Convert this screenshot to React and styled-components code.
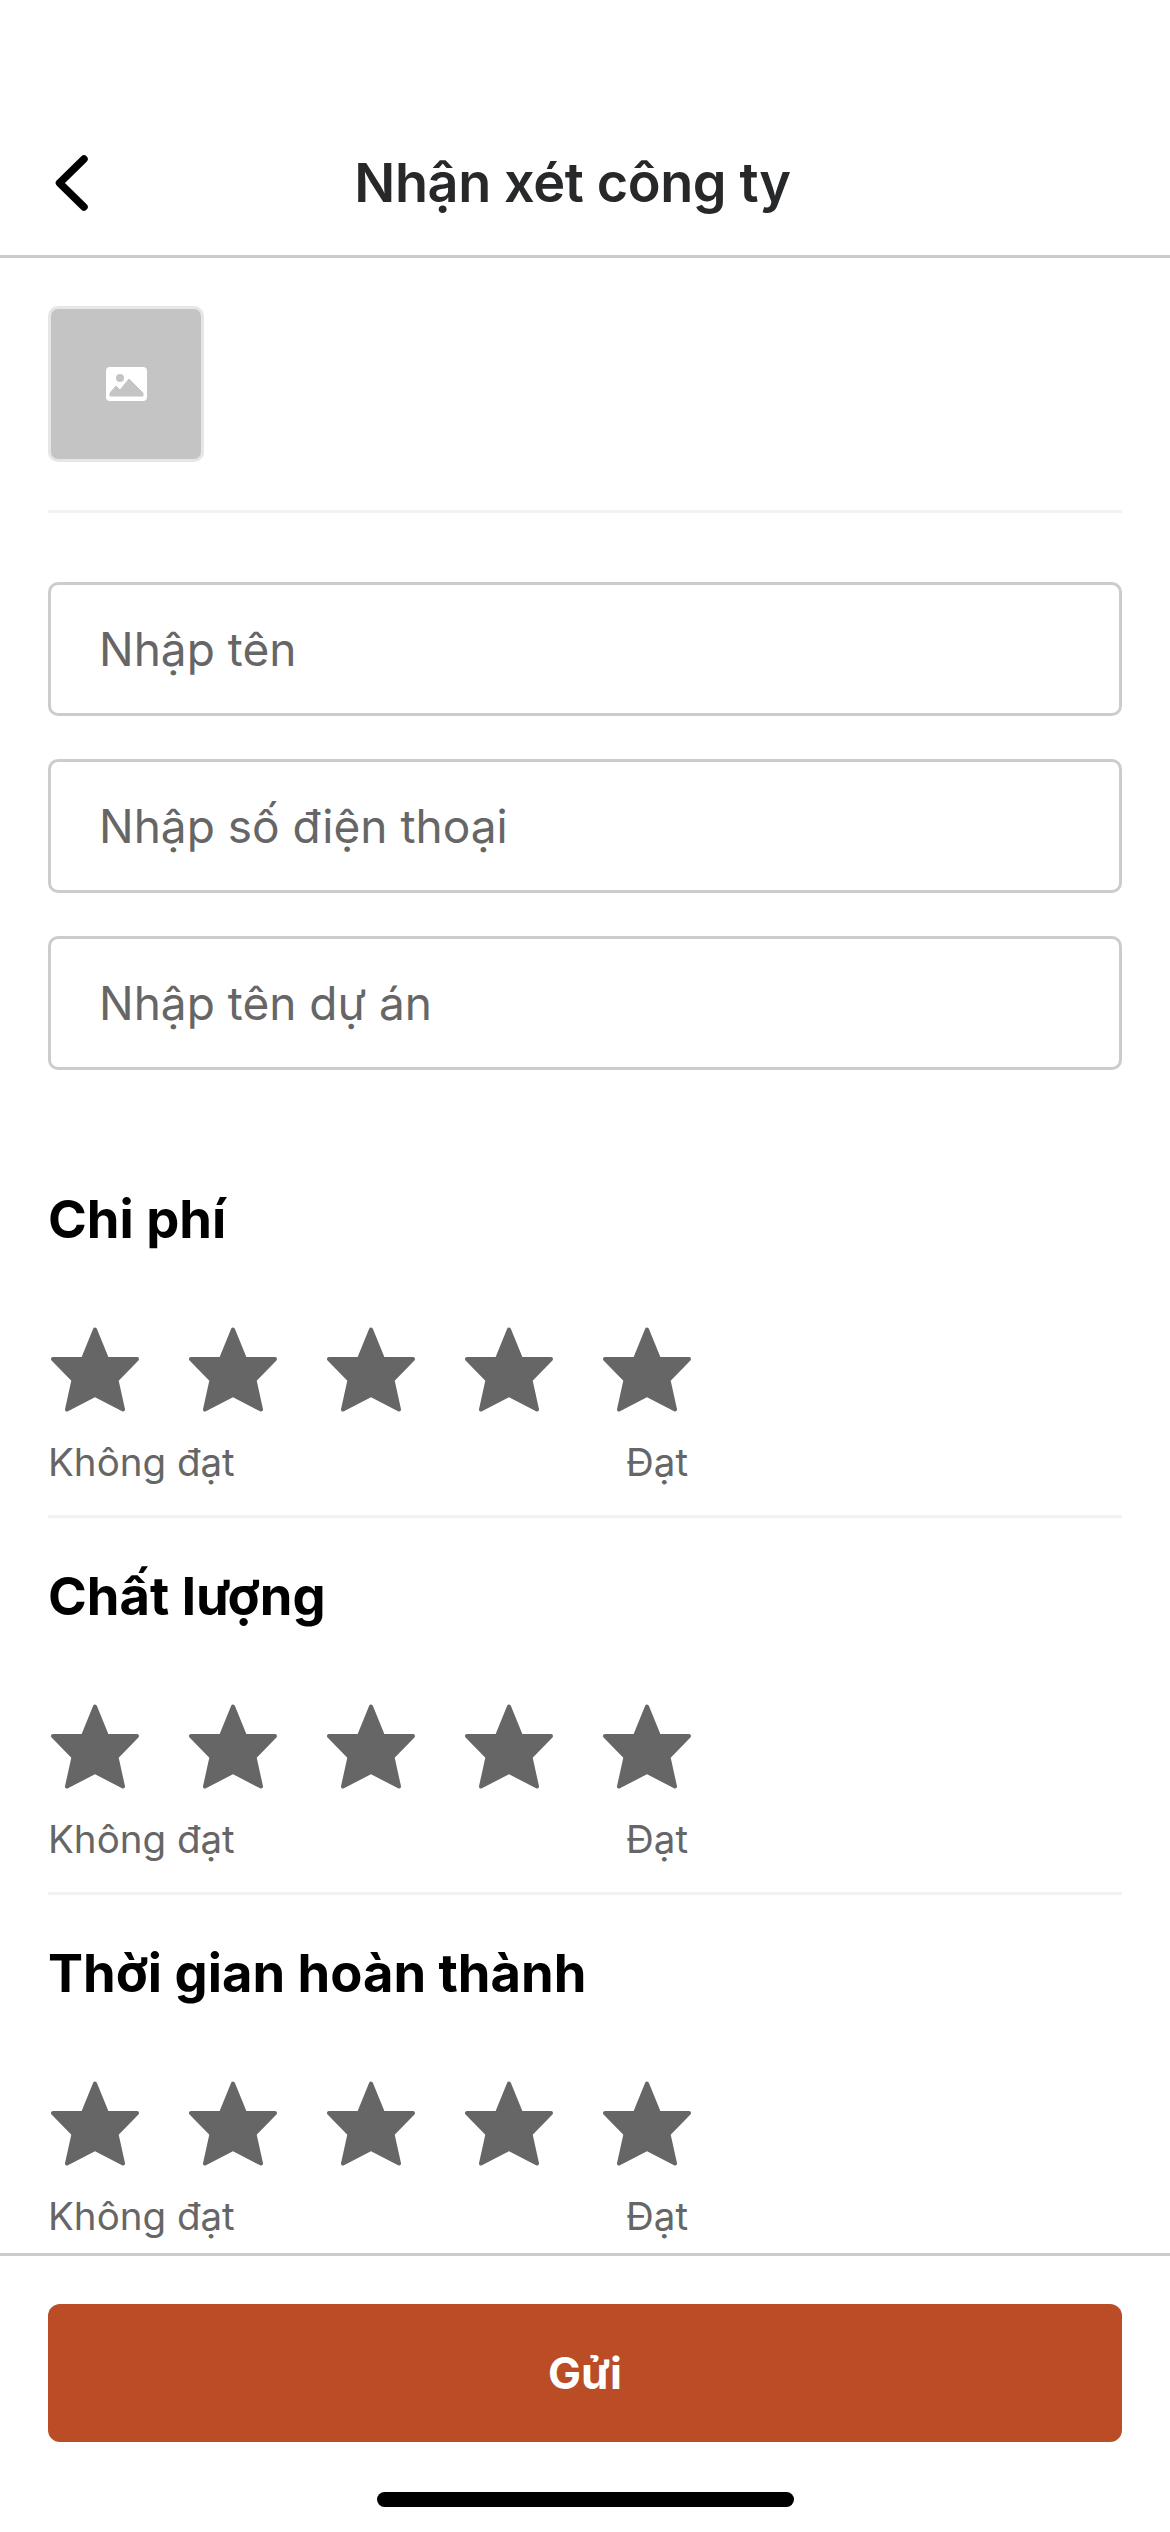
import React from "react";
import styled, { createGlobalStyle } from "styled-components";

const GlobalStyle = createGlobalStyle`
  * { box-sizing: border-box; }
  html, body { margin: 0; padding: 0; background: #fff; }
  body { font-family: Inter, "Liberation Sans", sans-serif; }
`;

const Page = styled.div`
  width: 1170px;
  height: 2532px;
  display: flex;
  flex-direction: column;
  background: #fff;
  overflow: hidden;
`;

const Header = styled.header`
  height: 258px;
  flex: none;
  padding: 125px 0 0 55px;
  display: flex;
  align-items: flex-start;
  border-bottom: 3px solid #cbcbcb;
`;

const BackButton = styled.button`
  width: 34px;
  height: 56px;
  margin-top: 30px;
  padding: 0;
  border: none;
  background: none;
  flex: none;
  display: block;
`;

const Title = styled.h1`
  flex: 1;
  margin: 0;
  padding-right: 114px;
  text-align: center;
  font-size: 54px;
  letter-spacing: -0.4px;
  line-height: 116px;
  font-weight: 600;
  color: #26282a;
`;

const Content = styled.main`
  flex: 1;
  min-height: 0;
  overflow: hidden;
  padding: 48px 48px 0;
`;

const PhotoBox = styled.div`
  width: 156px;
  height: 156px;
  display: flex;
  align-items: center;
  justify-content: center;
  background: #c4c4c4;
  border: 3px solid #e6e6e6;
  border-radius: 10px;
`;

const Divider = styled.div`
  height: 3px;
  background: #f2f2f2;
`;

const PhotoDivider = styled(Divider)`
  margin-top: 48px;
`;

const Fields = styled.div`
  display: flex;
  flex-direction: column;
  gap: 43px;
  margin-top: 69px;
`;

const Field = styled.input`
  width: 100%;
  height: 134px;
  padding: 0 48px;
  border: 3px solid #cccccc;
  border-radius: 10px;
  outline: none;
  font-family: inherit;
  font-size: 46px;
  background: #fff;
  &::placeholder {
    color: #666666;
    opacity: 1;
  }
`;

const Sections = styled.div`
  margin-top: 111px;
`;

const Section = styled.section`
  height: 377px;
`;

const SectionTitle = styled.h2`
  margin: 0;
  font-size: 52.5px;
  line-height: 76px;
  font-weight: 700;
  color: #000;
`;

const Stars = styled.div`
  display: flex;
  gap: 50px;
  margin: 70px 0 0 3px;
`;

const Labels = styled.div`
  width: 640px;
  display: flex;
  justify-content: space-between;
  margin-top: 22px;
  font-size: 38.5px;
  line-height: 56px;
  color: #666666;
`;

const SectionDivider = styled(Divider)`
  margin-top: 25px;
`;

const Footer = styled.footer`
  flex: none;
  height: 279px;
  padding: 48px 48px 0;
  border-top: 3px solid #cbcbcb;
  display: flex;
  flex-direction: column;
  align-items: center;
`;

const SubmitButton = styled.button`
  width: 100%;
  height: 138px;
  border: none;
  border-radius: 12px;
  background: #ba4c26;
  color: #fff;
  font-family: inherit;
  font-size: 44px;
  font-weight: 700;
`;

const HomeIndicator = styled.div`
  width: 417px;
  height: 15px;
  margin-top: 50px;
  border-radius: 8px;
  background: #000;
`;

const BackIcon = () => (
  <svg width="34" height="56" viewBox="0 0 34 56" fill="none">
    <path d="M29 4 4.500 28 29 52" stroke="#000" strokeWidth="7.500" strokeLinecap="round" strokeLinejoin="round" />
  </svg>
);

const PhotoIcon = () => (
  <svg width="41" height="34" viewBox="0 0 41 34">
    <rect width="41" height="34" rx="4" fill="#fff" />
    <circle cx="14" cy="11" r="4" fill="#c4c4c4" />
    <path d="M4 29v-3l6-7 4 4 9-11 14 14v3z" fill="#c4c4c4" stroke="#c4c4c4" strokeWidth="1" strokeLinejoin="round" />
  </svg>
);

const StarIcon = () => (
  <svg width="88" height="85" viewBox="0 0 88 85">
    <path
      d="M44 2.500 56 32H86L65.500 53 72 82.500 44 68 16 82.500 22.500 53 2 32H32Z"
      fill="#666666"
      stroke="#666666"
      strokeWidth="4"
      strokeLinejoin="round"
    />
  </svg>
);

const criteria = ["Chi phí", "Chất lượng", "Thời gian hoàn thành"];

function App() {
  return (
    <Page>
      <GlobalStyle />
      <Header>
        <BackButton aria-label="Quay lại">
          <BackIcon />
        </BackButton>
        <Title>Nhận xét công ty</Title>
      </Header>
      <Content>
        <PhotoBox>
          <PhotoIcon />
        </PhotoBox>
        <PhotoDivider />
        <Fields>
          <Field placeholder="Nhập tên" />
          <Field placeholder="Nhập số điện thoại" />
          <Field placeholder="Nhập tên dự án" />
        </Fields>
        <Sections>
          {criteria.map((title, index) => (
            <Section key={title}>
              <SectionTitle>{title}</SectionTitle>
              <Stars>
                {[1, 2, 3, 4, 5].map((n) => (
                  <StarIcon key={n} />
                ))}
              </Stars>
              <Labels>
                <span>Không đạt</span>
                <span>Đạt</span>
              </Labels>
              {index < criteria.length - 1 && <SectionDivider />}
            </Section>
          ))}
        </Sections>
      </Content>
      <Footer>
        <SubmitButton>Gửi</SubmitButton>
        <HomeIndicator />
      </Footer>
    </Page>
  );
}

export default App;
